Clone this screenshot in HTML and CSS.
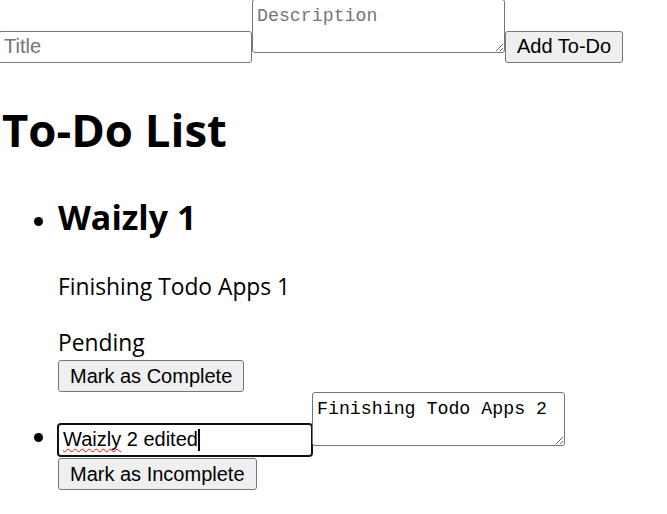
FILE: index.html
```html
<!DOCTYPE html>
<html lang="en">
<head>
<meta charset="utf-8">
<title>To-Do List</title>
<link rel="stylesheet" href="styles.css">
</head>
<body>
<div class="page">
<form class="add-form"><input class="field" type="text" placeholder="Title"><textarea class="area" placeholder="Description"></textarea><button class="btn" type="button">Add To-Do</button></form>
<h1 class="title">To-Do List</h1>
<ul class="todos">
<li class="todo"><h2 class="todo-title">Waizly 1</h2><p class="todo-text">Finishing Todo Apps 1</p><div class="todo-text todo-status">Pending</div><button class="btn" type="button">Mark as Complete</button></li>
<li class="todo"><span class="field field-focus" role="textbox"><span class="misspelled">Waizly</span> 2 edited<span class="caret"></span></span><textarea class="area">Finishing Todo Apps 2</textarea><br><button class="btn" type="button">Mark as Incomplete</button></li>
</ul>
</div>
</body>
</html>
```
FILE: styles.css
```css
html, body {
  margin: 0;
  background: #fff;
  overflow: hidden;
}

body {
  font-family: "Open Sans", "Noto Sans", sans-serif;
  font-size: 24px;
  line-height: 1.33;
  color: #000;
}

.page {
  margin: -1px 0 0 -2px;
}

.add-form {
  margin: 0;
}

.field {
  display: inline-block;
  box-sizing: border-box;
  width: 254px;
  height: 32px;
  margin: 0;
  padding: 3.5px 5px;
  border: 1px solid #767676;
  border-radius: 3px;
  background: #fff;
  color: #000;
  font: 20px/23px "Liberation Sans", Arial, sans-serif;
  vertical-align: baseline;
}

.field::placeholder {
  color: #757575;
}

.field-focus {
  border-color: #101010;
  box-shadow: 0 0 0 1px #101010;
  white-space: pre;
  padding-left: 4px;
}

.misspelled {
  text-decoration: underline wavy #f00;
  text-decoration-skip-ink: none;
  text-underline-offset: 2px;
  text-decoration-thickness: 1px;
}

.caret {
  display: inline-block;
  width: 0;
  height: 22px;
  border-left: 2px solid #000;
  vertical-align: -5px;
}

.area {
  box-sizing: border-box;
  width: 253px;
  height: 54px;
  margin: 0;
  padding: 5px 4px 3px;
  border: 1px solid #767676;
  border-radius: 3px;
  background: #fff;
  color: #000;
  font: 18.25px/22px "Liberation Mono", monospace;
  vertical-align: baseline;
}

.area::placeholder {
  color: #757575;
}

.btn {
  margin: 0;
  padding: 3.5px 11px;
  border: 1px solid #767676;
  border-radius: 3px;
  background: #efefef;
  color: #000;
  font: 20px/23px "Liberation Sans", Arial, sans-serif;
}

.title {
  margin: 33px 0 32px;
  padding: 3px 0 0 4px;
  font-size: 45.5px;
  line-height: 61px;
  font-weight: 700;
}

.todos {
  margin: 24px 0;
  padding-left: 60px;
}

.todo-title {
  margin: 30px 0;
  padding-top: 3px;
  font-size: 34px;
  line-height: 45px;
  font-weight: 700;
}

.todo-text {
  margin: 24px 0;
  padding-top: 2px;
  font-size: 22.8px;
  line-height: 30px;
}

.todo-status {
  margin-bottom: 0;
}
```
